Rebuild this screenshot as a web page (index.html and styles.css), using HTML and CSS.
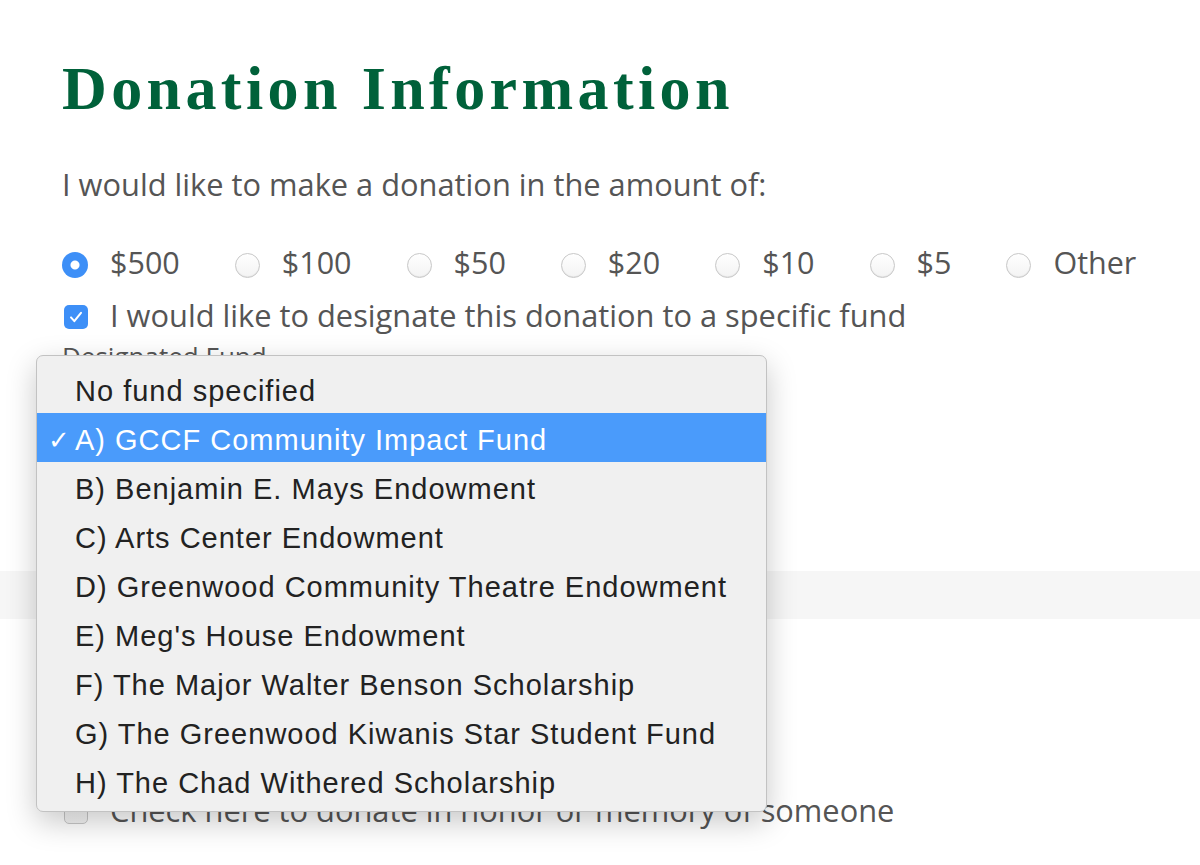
FILE: index.html
```html
<!DOCTYPE html>
<html lang="en">
<head>
  <meta charset="UTF-8" />
  <meta name="viewport" content="width=device-width, initial-scale=1.0"/>
  <title>Donation Information</title>
  <link rel="stylesheet" href="styles.css">
</head>
<body>
  <form class="donation">
    <h1>Donation Information</h1>
    <p class="lead">I would like to make a donation in the amount of:</p>

    <div class="amounts">
      <label class="amount"><span class="radio checked"></span>$500</label>
      <label class="amount"><span class="radio"></span>$100</label>
      <label class="amount"><span class="radio"></span>$50</label>
      <label class="amount"><span class="radio"></span>$20</label>
      <label class="amount"><span class="radio"></span>$10</label>
      <label class="amount"><span class="radio"></span>$5</label>
      <label class="amount"><span class="radio"></span>Other</label>
    </div>

    <label class="check designate"><span class="box checked">
      <svg viewBox="0 0 24 24" width="20" height="20"><path d="M6 12.5l4 4.5L18 7" fill="none" stroke="#fff" stroke-width="2.4" stroke-linecap="round" stroke-linejoin="round"/></svg>
    </span>I would like to designate this donation to a specific fund</label>

    <div class="field-label">Designated Fund</div>
    <div class="spacer-a"></div>
    <div class="band"></div>
    <div class="spacer-b"></div>

    <label class="check"><span class="box"></span>Check here to donate in honor or memory of someone</label>

    <ul class="menu">
      <li>No fund specified</li>
      <li class="selected"><span class="tick">✓</span>A) GCCF Community Impact Fund</li>
      <li>B) Benjamin E. Mays Endowment</li>
      <li>C) Arts Center Endowment</li>
      <li>D) Greenwood Community Theatre Endowment</li>
      <li>E) Meg's House Endowment</li>
      <li>F) The Major Walter Benson Scholarship</li>
      <li>G) The Greenwood Kiwanis Star Student Fund</li>
      <li>H) The Chad Withered Scholarship</li>
    </ul>
  </form>
</body>
</html>
```

FILE: styles.css
```css
body {
  margin: 0;
  background-color: #fff;
  font-family: "Open Sans", "Liberation Sans", sans-serif;
  color: #555;
}
.donation {
  position: relative;
  padding-top: 50px;
  padding-bottom: 60px;
}
h1 {
  margin: 0 0 0 62px;
  font-family: "Liberation Serif", "DejaVu Serif", serif;
  font-weight: bold;
  font-size: 62px;
  line-height: 76px;
  letter-spacing: 4.4px;
  color: #00613a;
}
.lead {
  margin: 38px 0 0 62px;
  font-size: 30.8px;
  line-height: 40px;
}
.amounts {
  display: flex;
  gap: 55px;
  margin: 38px 0 0 62px;
}
.amount {
  display: flex;
  align-items: center;
  gap: 22px;
  font-size: 30.5px;
  line-height: 40px;
}
.radio {
  width: 25px;
  height: 25px;
  border-radius: 50%;
  box-sizing: border-box;
  border: 1px solid #c8c8c8;
  background: linear-gradient(#fff, #f3f3f3);
  box-shadow: inset 0 -1px 1px rgba(0,0,0,0.06);
  margin-top: 6px;
}
.radio.checked {
  width: 26px;
  height: 26px;
  border: none;
  background: #3d8ff7 radial-gradient(circle, #fff 0 4px, transparent 5px);
  box-shadow: none;
}
.check {
  display: flex;
  align-items: center;
  gap: 22px;
  margin-left: 64px;
  font-size: 30.8px;
  line-height: 40px;
}
.designate {
  margin-top: 13px;
}
.box {
  width: 24px;
  height: 24px;
  box-sizing: border-box;
  border: 1px solid #c8c8c8;
  border-radius: 5px;
  background: linear-gradient(#fff, #f3f3f3);
  display: flex;
  align-items: center;
  justify-content: center;
  margin-top: 4px;
}
.box.checked {
  border: none;
  background: #3d8ff7;
}
.field-label {
  margin: 4px 0 0 62px;
  font-size: 26px;
  line-height: 34px;
}
.spacer-a {
  height: 198px;
}
.band {
  height: 48px;
  background-color: #f6f6f6;
}
.spacer-b {
  height: 171px;
}
.menu {
  position: absolute;
  left: 36px;
  top: 355px;
  width: 731px;
  box-sizing: border-box;
  margin: 0;
  padding: 8px 0 6px;
  list-style: none;
  background-color: #f0f0f0;
  border: 1px solid #c2c2c2;
  border-radius: 7px;
  box-shadow: 0 10px 30px rgba(0,0,0,0.22);
  font-family: "Liberation Sans", Arial, sans-serif;
  font-size: 29px;
  letter-spacing: 1px;
  color: #222;
}
.menu li {
  position: relative;
  height: 49px;
  line-height: 55px;
  padding-left: 38px;
}
.menu li.selected {
  background-color: #4a9bfb;
  color: #fff;
}
.tick {
  position: absolute;
  left: 11px;
  font-family: "DejaVu Sans", sans-serif;
  font-weight: bold;
  font-size: 26px;
  letter-spacing: 0;
}
```
